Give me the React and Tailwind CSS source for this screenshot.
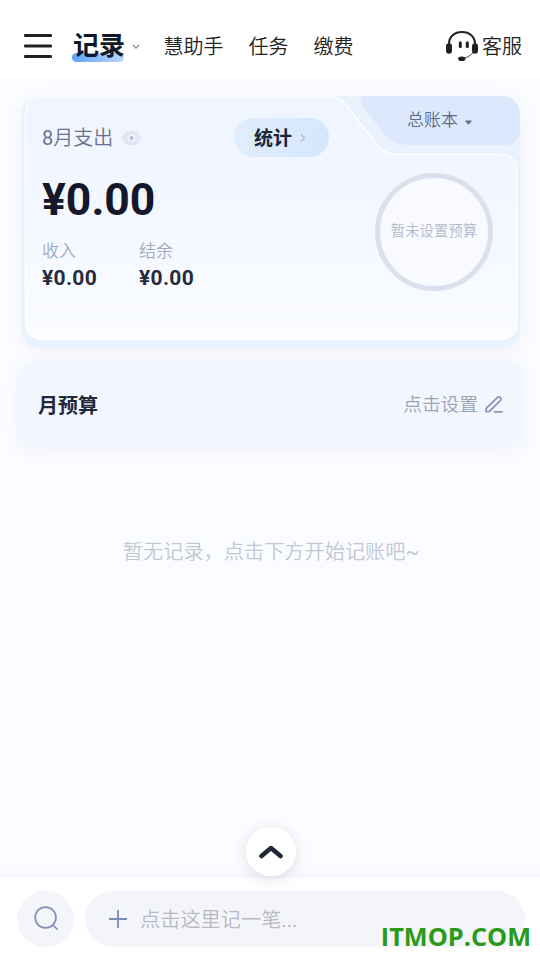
import React from "react";

const navItems = ["慧助手", "任务", "缴费"];

const totals = [
  { label: "收入", value: "¥0.00" },
  { label: "结余", value: "¥0.00" },
];

function Header() {
  return (
    <header className="flex h-[78px] items-center bg-white pt-[13px] pr-[18px] pl-6">
      <svg width="28" height="26" viewBox="0 0 28 26" className="mt-px mr-5 shrink-0">
        <path d="M1.2 2.5h25.6M1.2 13h25.6M1.2 23.5h25.6" stroke="#202124" strokeWidth="2.8" strokeLinecap="round" />
      </svg>
      <div className="relative -mt-[3px] h-9 w-[52px] text-[26px] leading-9 font-bold text-[#111827]">
        <div className="absolute bottom-0 left-0 h-[9px] w-[52px] rounded-full bg-linear-to-r from-[#60a1fb] to-[#b9d9fe]" />
        <span className="relative top-[2px] left-px whitespace-nowrap">记录</span>
      </div>
      <svg width="8" height="6" viewBox="0 0 8 6" className="mt-[2px] ml-2 shrink-0" fill="none">
        <path d="M1 1l3 3 3-3" stroke="#8d9095" strokeWidth="1.3" />
      </svg>
      <nav className="mt-[2px] ml-[23.5px] flex gap-[25px] text-xl font-[350] text-[#222]">
        {navItems.map(item => (
          <a key={item} className="whitespace-nowrap">
            {item}
          </a>
        ))}
      </nav>
      <div className="ml-auto flex items-center gap-[3px]">
        <svg width="34" height="32" viewBox="0 0 34 32" className="shrink-0" fill="none">
          <path d="M4 14C4 6.5 9.5 2 17 2s13 4.500 13 12" stroke="#202124" strokeWidth="2.1" />
          <path d="M29.5 20c-1.500 4-5 6.500-10 8" stroke="#202124" strokeWidth=".8" />
          <rect x="1" y="13.3" width="6" height="10.5" rx="3" fill="#202124" />
          <rect x="27" y="13.3" width="6" height="10.5" rx="3" fill="#202124" />
          <rect x="13.8" y="11.5" width="3" height="6.5" rx="1.3" fill="#202124" />
          <rect x="20.8" y="11.5" width="3" height="6.5" rx="1.3" fill="#202124" />
          <ellipse cx="16.8" cy="28.7" rx="3.7" ry="2.3" fill="#202124" />
        </svg>
        <span className="mt-[2px] text-xl font-[350] whitespace-nowrap text-[#222]">客服</span>
      </div>
    </header>
  );
}

function CardShape() {
  return (
    <svg width="498" height="252" viewBox="0 0 498 252" className="absolute inset-0" fill="none">
      <defs>
        <linearGradient id="panel" x1="0" y1="0" x2="0" y2="1">
          <stop offset="0" stopColor="#eff5ff" />
          <stop offset="0.45" stopColor="#f3f7ff" />
          <stop offset="1" stopColor="#fafcff" />
        </linearGradient>
      </defs>
      <path
        d="M344 0H480a18 18 0 0 1 18 18V35a14 14 0 0 1-14 14H386C375 49 368 45 361 37L340.5 9.500C337.500 5 339 0 344 0Z"
        fill="#dce9fc"
      />
      <path
        d="M19.5 .9H309C317 .9 322 5.500 326 11L355 49C360 55 366 58.300 374 58.300H479.500A15.500 15.500 0 0 1 495 74V228A15.500 15.500 0 0 1 479.500 243.500H19.500A16 16 0 0 1 3.500 227.500V17A16 16 0 0 1 19.500 .9Z"
        fill="url(#panel)"
        stroke="white"
        strokeWidth="1.3"
      />
    </svg>
  );
}

function SummaryCard() {
  return (
    <section className="relative mt-[18px] ml-[22px] h-[252px] w-[498px] rounded-[18px] bg-[#eaf2fe] shadow-[0_3px_18px_rgba(90,110,150,0.07)]">
      <CardShape />
      <div className="relative flex h-full justify-between pr-[27px] pl-5">
        <div className="pt-[22px]">
          <div className="flex h-[39px] items-center">
            <span className="w-[71px] text-xl font-[350] whitespace-nowrap text-[#69738d]">
              <span className="font-normal">8</span>月支出
            </span>
            <svg width="21" height="16" viewBox="0 0 21 16" className="ml-2">
              <path d="M0 8C3 3 6.5 .5 10.5 .5S18 3 21 8c-3 5-6.500 7.500-10.500 7.500S3 13 0 8Z" fill="#e0e6f2" />
              <circle cx="10.5" cy="8" r="3.5" fill="#f1f5fd" />
              <circle cx="10.5" cy="8" r="1.9" fill="#b3bdd3" />
            </svg>
            <button className="ml-[92px] flex h-[39px] w-[95px] items-center rounded-full bg-linear-to-r from-[#e1edfb] to-[#d5e6ff] pl-5 text-[19px] font-bold text-[#1b2538]">
              <span className="mt-[3px] whitespace-nowrap">统计</span>
              <svg width="6" height="10" viewBox="0 0 6 10" className="ml-2" fill="none">
                <path d="M1 1.5L4.5 5 1 8.5" stroke="#adb9cb" strokeWidth="1.1" />
              </svg>
            </button>
          </div>
          <div className="mt-[18px] text-[44.5px] leading-[50px] font-bold text-[#15182b]">¥0.00</div>
          <div className="mt-[14px] flex">
            {totals.map(t => (
              <div key={t.label} className="w-[97px]">
                <div className="text-[17px] leading-[25px] font-[350] text-[#a0aac1]">{t.label}</div>
                <div className="mt-px text-[21px] leading-[27px] font-bold tracking-[0.3px] text-[#272b3b]">{t.value}</div>
              </div>
            ))}
          </div>
        </div>
        <div className="flex w-[118px] flex-col items-center">
          <div className="flex h-[49px] items-center gap-[7px] pl-[11px] text-[17px] font-[350] whitespace-nowrap text-[#5d6983]">
            <span>总账本</span>
            <svg width="7" height="5" viewBox="0 0 7 5" className="mt-[3px]">
              <path d="M1 .5h5q1 0 .5 1L4 4.300q-.5.500-1 0L.5 1.500Q0 .5 1 .5Z" fill="#65718b" />
            </svg>
          </div>
          <div className="mt-7 flex h-[118px] w-[118px] shrink-0 items-center justify-center rounded-full border-5 border-[#dae1ec] bg-[#f8faff] text-[14.4px] font-[350] whitespace-nowrap text-[#b1b9ca]">
            暂未设置预算
          </div>
        </div>
      </div>
    </section>
  );
}

function BudgetRow() {
  return (
    <section className="mt-[14px] ml-[17px] flex h-[85px] w-[508px] items-center justify-between rounded-[17px] bg-[#f1f6ff] pr-[22px] pl-[21px] shadow-[0_4px_18px_rgba(90,110,150,0.06)]">
      <span className="mt-[2px] text-xl font-bold text-[#1f293b]">月预算</span>
      <div className="flex items-center gap-[7px] text-[18.7px] font-[350] text-[#9aa2b6]">
        <span className="mt-[2px]">点击设置</span>
        <svg width="18" height="17" viewBox="0 0 18 17" fill="none" stroke="#8c94b3" strokeWidth="1.8" strokeLinecap="round" strokeLinejoin="round">
          <path d="M1.2 15.6v-3.200L12.300 1.700q1.500-1.400 3 0t0 3L4.400 15.400Z" />
          <path d="M9.5 15.800h7.500" />
        </svg>
      </div>
    </section>
  );
}

function BottomBar() {
  return (
    <footer className="relative flex h-[82px] items-start gap-[11px] bg-white pt-[13px] pl-[17px] shadow-[0_-2px_14px_rgba(90,100,130,0.06)]">
      <button className="absolute -top-[51px] left-[246px] flex h-[49px] w-[50px] items-center justify-center rounded-full bg-white pt-px shadow-[0_3px_14px_rgba(50,60,90,0.15)]">
        <svg width="24" height="14" viewBox="0 0 24 14" fill="none">
          <path d="M2.5 11L12 3l9.500 8" stroke="#202633" strokeWidth="4.5" strokeLinecap="round" strokeLinejoin="round" />
        </svg>
      </button>
      <button className="flex h-14 w-[57px] items-center justify-center rounded-full bg-[#f4f5fb] pb-px pl-px">
        <svg width="25" height="25" viewBox="0 0 26 26" fill="none" stroke="#8392b4" strokeWidth="1.8">
          <circle cx="12" cy="12" r="10.8" />
          <path d="M19.5 19.500l5 5" />
        </svg>
      </button>
      <div className="flex h-14 w-[440px] items-center rounded-full bg-[#f4f5fb] pl-6 text-[20.2px] font-[350] text-[#b7b9bd]">
        <svg width="18" height="18" viewBox="0 0 18 18" className="mr-[13px]">
          <path d="M0 9h18M9 0v18" stroke="#7b8cb2" strokeWidth="1.8" />
        </svg>
        <span className="mt-[2px]">
          点击这里记一笔<span className="font-normal">...</span>
        </span>
      </div>
      <div className="absolute right-[9px] bottom-2 font-['Open_Sans',sans-serif] text-[25.3px] leading-8 font-bold text-[#2b9a18]">
        ITMOP.COM
      </div>
    </footer>
  );
}

export default function App() {
  return (
    <div className="flex h-[960px] w-[540px] flex-col overflow-hidden bg-[#fbfcff] font-[Roboto,'Noto_Sans_CJK_SC',sans-serif]">
      <Header />
      <main className="flex-1">
        <SummaryCard />
        <BudgetRow />
        <p className="mt-[90px] pl-[2px] text-center text-[20.2px] leading-[30px] font-[350] text-[#c1c7d5]">
          暂无记录，点击下方开始记账吧<span className="font-normal">~</span>
        </p>
      </main>
      <BottomBar />
    </div>
  );
}
